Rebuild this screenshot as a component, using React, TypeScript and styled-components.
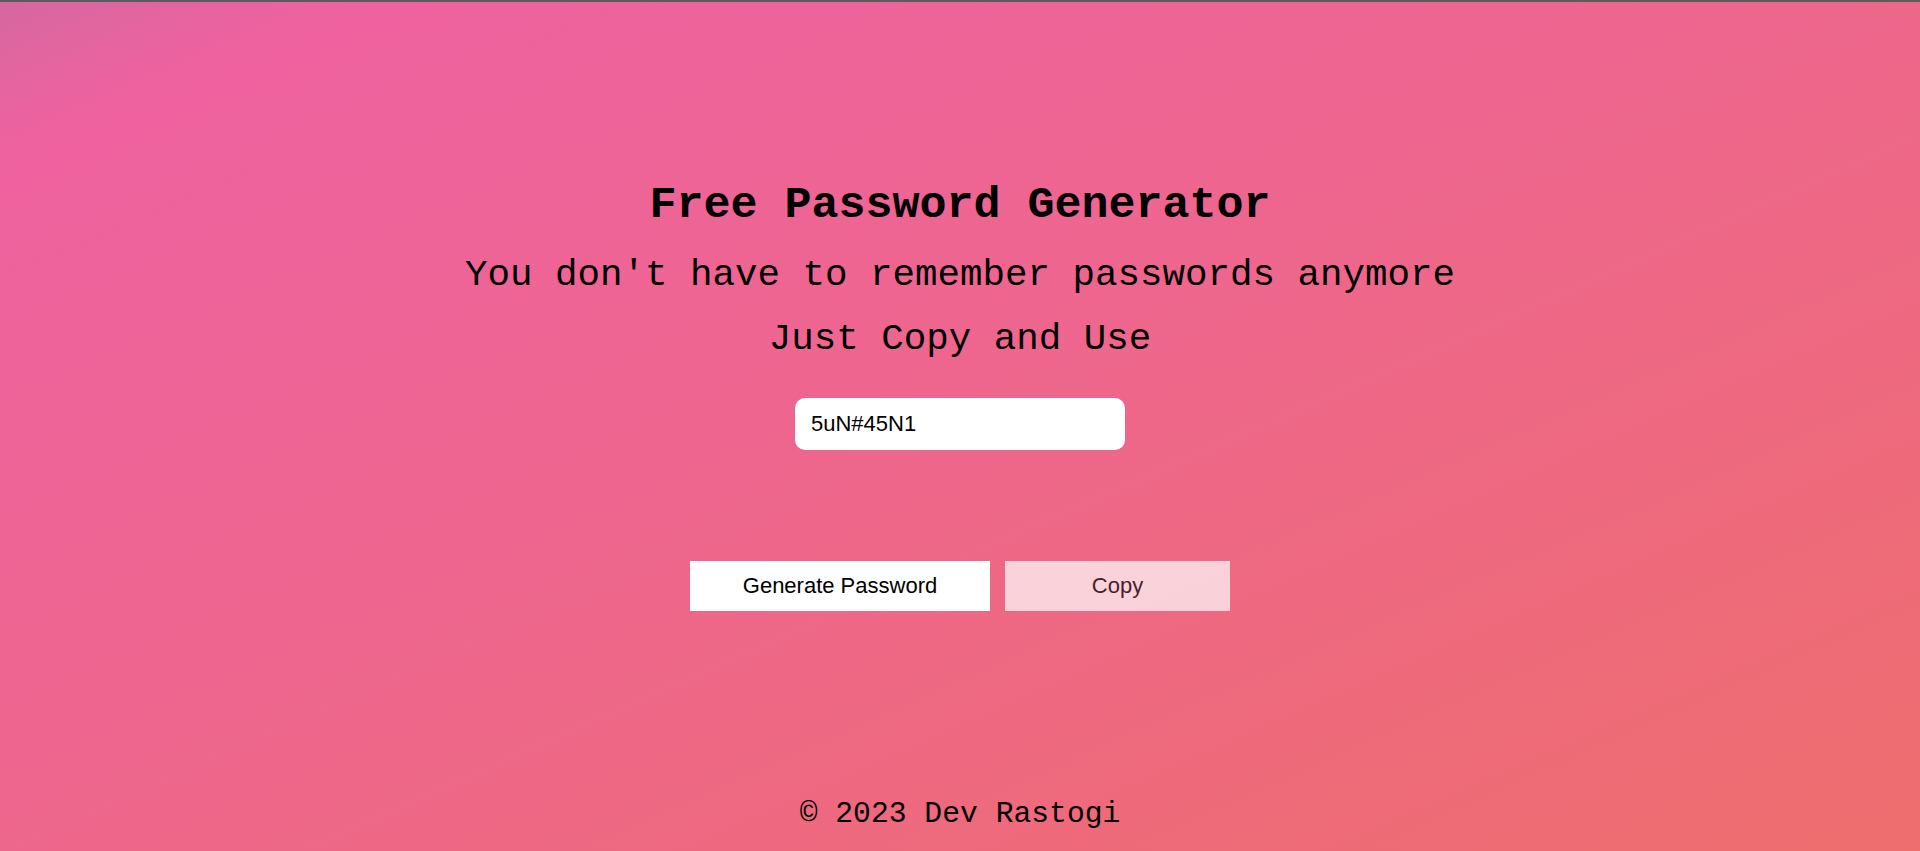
import React, { useState } from "react";
import styled, { createGlobalStyle } from "styled-components";

const GlobalStyle = createGlobalStyle`
  html, body {
    margin: 0;
    padding: 0;
  }
  body {
    font-family: "Courier New", "Liberation Mono", monospace;
  }
  * {
    box-sizing: border-box;
  }
`;

const Page = styled.div`
  min-height: 100vh;
  border-top: 2px solid #5d5b5c;
  background: linear-gradient(
    to bottom right,
    #d6679f 0%,
    #ef62a0 9%,
    #ee668f 45%,
    #ee6a7c 75%,
    #ee6e6e 100%
  );
  display: flex;
  flex-direction: column;
  align-items: center;
  color: #000;
`;

const Title = styled.h1`
  margin: 178px 0 0;
  font-family: "Courier New", "Liberation Mono", monospace;
  font-weight: 700;
  font-size: 45px;
  line-height: 52px;
  text-align: center;
`;

const Line = styled.p<{ $gap: number }>`
  margin: ${(p) => p.$gap}px 0 0;
  font-family: "Courier New", "Liberation Mono", monospace;
  font-weight: 400;
  font-size: 37.5px;
  line-height: 44px;
  text-align: center;
`;

const PasswordField = styled.input`
  margin-top: 37px;
  width: 330px;
  height: 52px;
  border: none;
  border-radius: 10px;
  background: #fff;
  padding: 0 16px;
  font-family: Arial, "Liberation Sans", sans-serif;
  font-size: 22px;
  color: #000;
  outline: none;
`;

const ButtonRow = styled.div`
  margin-top: 111px;
  display: flex;
  gap: 15px;
`;

const ActionButton = styled.button<{ $width: number; $dim?: boolean }>`
  width: ${(p) => p.$width}px;
  height: 50px;
  border: none;
  border-radius: 0;
  background: #fff;
  color: #000;
  font-family: Arial, "Liberation Sans", sans-serif;
  font-size: 22px;
  cursor: pointer;
  opacity: ${(p) => (p.$dim ? 0.7 : 1)};
  padding: 0;
`;

const Footer = styled.footer`
  margin-top: auto;
  margin-bottom: 19px;
  font-family: "Courier New", "Liberation Mono", monospace;
  font-size: 29.7px;
  line-height: 36px;
  text-align: center;
`;

export default function App() {
  const [password, setPassword] = useState("5uN#45N1");

  const generate = () => {
    const chars =
      "ABCDEFGHIJKLMNOPQRSTUVWXYZabcdefghijklmnopqrstuvwxyz0123456789!@#$%&*";
    let out = "";
    for (let i = 0; i < 8; i++) {
      out += chars[Math.floor(Math.random() * chars.length)];
    }
    setPassword(out);
  };

  return (
    <>
      <GlobalStyle />
      <Page>
        <Title>Free Password Generator</Title>
        <Line $gap={21}>You don't have to remember passwords anymore</Line>
        <Line $gap={20}>Just Copy and Use</Line>
        <PasswordField
          type="text"
          value={password}
          onChange={(e) => setPassword(e.target.value)}
        />
        <ButtonRow>
          <ActionButton $width={300} onClick={generate}>
            Generate Password
          </ActionButton>
          <ActionButton $width={225} $dim>
            Copy
          </ActionButton>
        </ButtonRow>
        <Footer>© 2023 Dev Rastogi</Footer>
      </Page>
    </>
  );
}
